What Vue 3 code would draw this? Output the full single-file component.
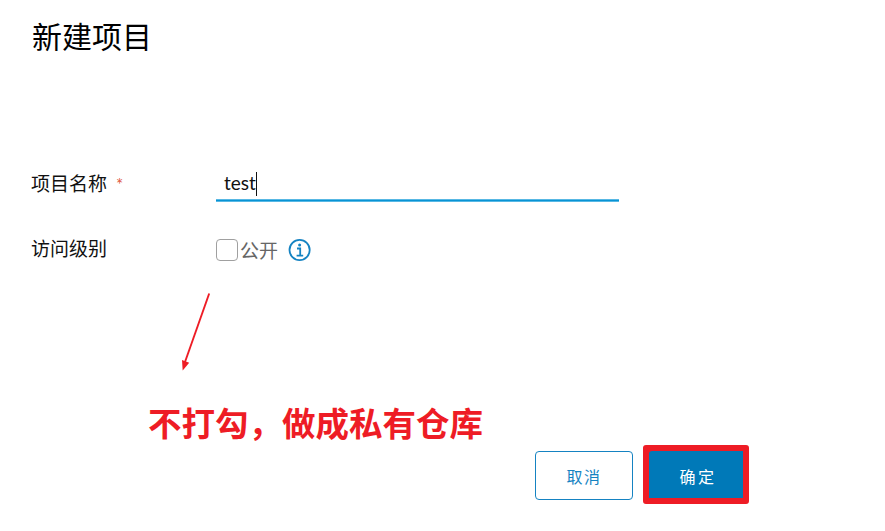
<script setup>
import { ref } from 'vue'

const name = ref('test')
const isPublic = ref(false)
</script>

<template>
  <main class="dialog">
    <h1 class="title">新建项目</h1>
    <form class="form" @submit.prevent>
      <div class="row name-row">
        <label class="label">项目名称<span class="required">*</span></label>
        <div class="field"><span>{{ name }}</span><i class="caret"></i></div>
      </div>
      <div class="row access-row">
        <label class="label">访问级别</label>
        <div class="option">
          <span class="box" role="checkbox" :aria-checked="isPublic" @click="isPublic = !isPublic"></span>
          <span class="option-text">公开</span>
          <svg class="info" width="24" height="24" viewBox="0 0 24 24" fill="none" stroke="#1583c2">
            <circle cx="11.6" cy="12" r="10.1" stroke-width="1.8" />
            <circle cx="11.6" cy="7.1" r="1.5" fill="#1583c2" stroke="none" />
            <path d="M9 10.5H12.2V17.5M8.6 17.6H15.2" stroke-width="1.8" />
          </svg>
        </div>
      </div>
    </form>
    <section class="note">
      <svg class="arrow" width="34" height="82" viewBox="0 0 34 82">
        <path d="M31.2 3.5L7 72" stroke="#ee1c25" stroke-width="1.9" fill="none" />
        <path d="M4.7 80.5L4 70L11.2 72.8Z" fill="#ee1c25" />
      </svg>
      <p class="note-text">不打勾，做成私有仓库</p>
    </section>
    <footer class="actions">
      <button class="btn cancel">取消</button>
      <div class="highlight"><button class="btn confirm">确定</button></div>
    </footer>
  </main>
</template>

<style>
body {
  margin: 0;
  background: #fff;
}
</style>

<style scoped>
.dialog {
  box-sizing: border-box;
  width: 885px;
  height: 531px;
  padding: 13px 0 0 31px;
  overflow: hidden;
  font-family: "Noto Sans CJK SC", sans-serif;
  color: #111;
}
.title {
  margin: 0;
  padding-left: 1px;
  height: 44px;
  font-size: 30px;
  line-height: 44px;
  font-weight: 400;
  color: #000;
}
.form {
  padding-top: 109px;
}
.row {
  display: flex;
}
.name-row {
  height: 35px;
}
.label {
  width: 185px;
  font-size: 19px;
  line-height: 34px;
}
.required {
  margin-left: 9px;
  font-family: Lato, sans-serif;
  font-size: 17px;
  color: #e0593f;
}
.field {
  box-sizing: border-box;
  display: flex;
  align-items: center;
  width: 403px;
  height: 35px;
  padding-left: 8px;
  border-bottom: 1px solid #0893d4;
  box-shadow: inset 0 -1px #58b8e4, 0 1px #58b8e4;
  font-family: Lato, sans-serif;
  font-size: 19px;
  line-height: 34px;
}
.caret {
  width: 1px;
  height: 24px;
  margin-top: 2px;
  background: #111;
}
.access-row {
  margin-top: 30px;
  height: 37px;
}
.option {
  display: flex;
  align-items: center;
  height: 38px;
}
.box {
  box-sizing: border-box;
  width: 22px;
  height: 22px;
  border: 1.5px solid #a0a0a0;
  border-radius: 4px;
}
.option-text {
  margin-left: 2px;
  font-size: 19px;
  line-height: 38px;
  color: #666;
}
.info {
  margin-left: 10px;
}
.note {
  padding: 22px 0 0 117px;
}
.arrow {
  display: block;
  margin-left: 30px;
}
.note-text {
  margin: 25px 0 0;
  height: 53px;
  font-size: 33.5px;
  line-height: 50px;
  font-weight: 700;
  color: #ee1c25;
}
.actions {
  display: flex;
  align-items: center;
  height: 59px;
  margin-top: -5px;
  padding-left: 504px;
}
.btn {
  box-sizing: border-box;
  margin: 0;
  padding: 0;
  font-family: inherit;
  font-size: 16px;
  letter-spacing: 1.6px;
}
.cancel {
  width: 98px;
  height: 49px;
  margin-top: 2px;
  border: 1px solid #1583c2;
  border-radius: 4px;
  background: #fff;
  color: #1583c2;
}
.highlight {
  box-sizing: border-box;
  width: 106px;
  height: 59px;
  margin-left: 10px;
  border: 6px solid #ee1c25;
  border-radius: 3px;
  background: #ee1c25;
}
.confirm {
  display: block;
  width: 94px;
  height: 47px;
  padding: 2px 0 0 4px;
  border: 0;
  border-radius: 3px 0 0 0;
  background: #0079b8;
  letter-spacing: 2.6px;
  color: #fff;
}
</style>
